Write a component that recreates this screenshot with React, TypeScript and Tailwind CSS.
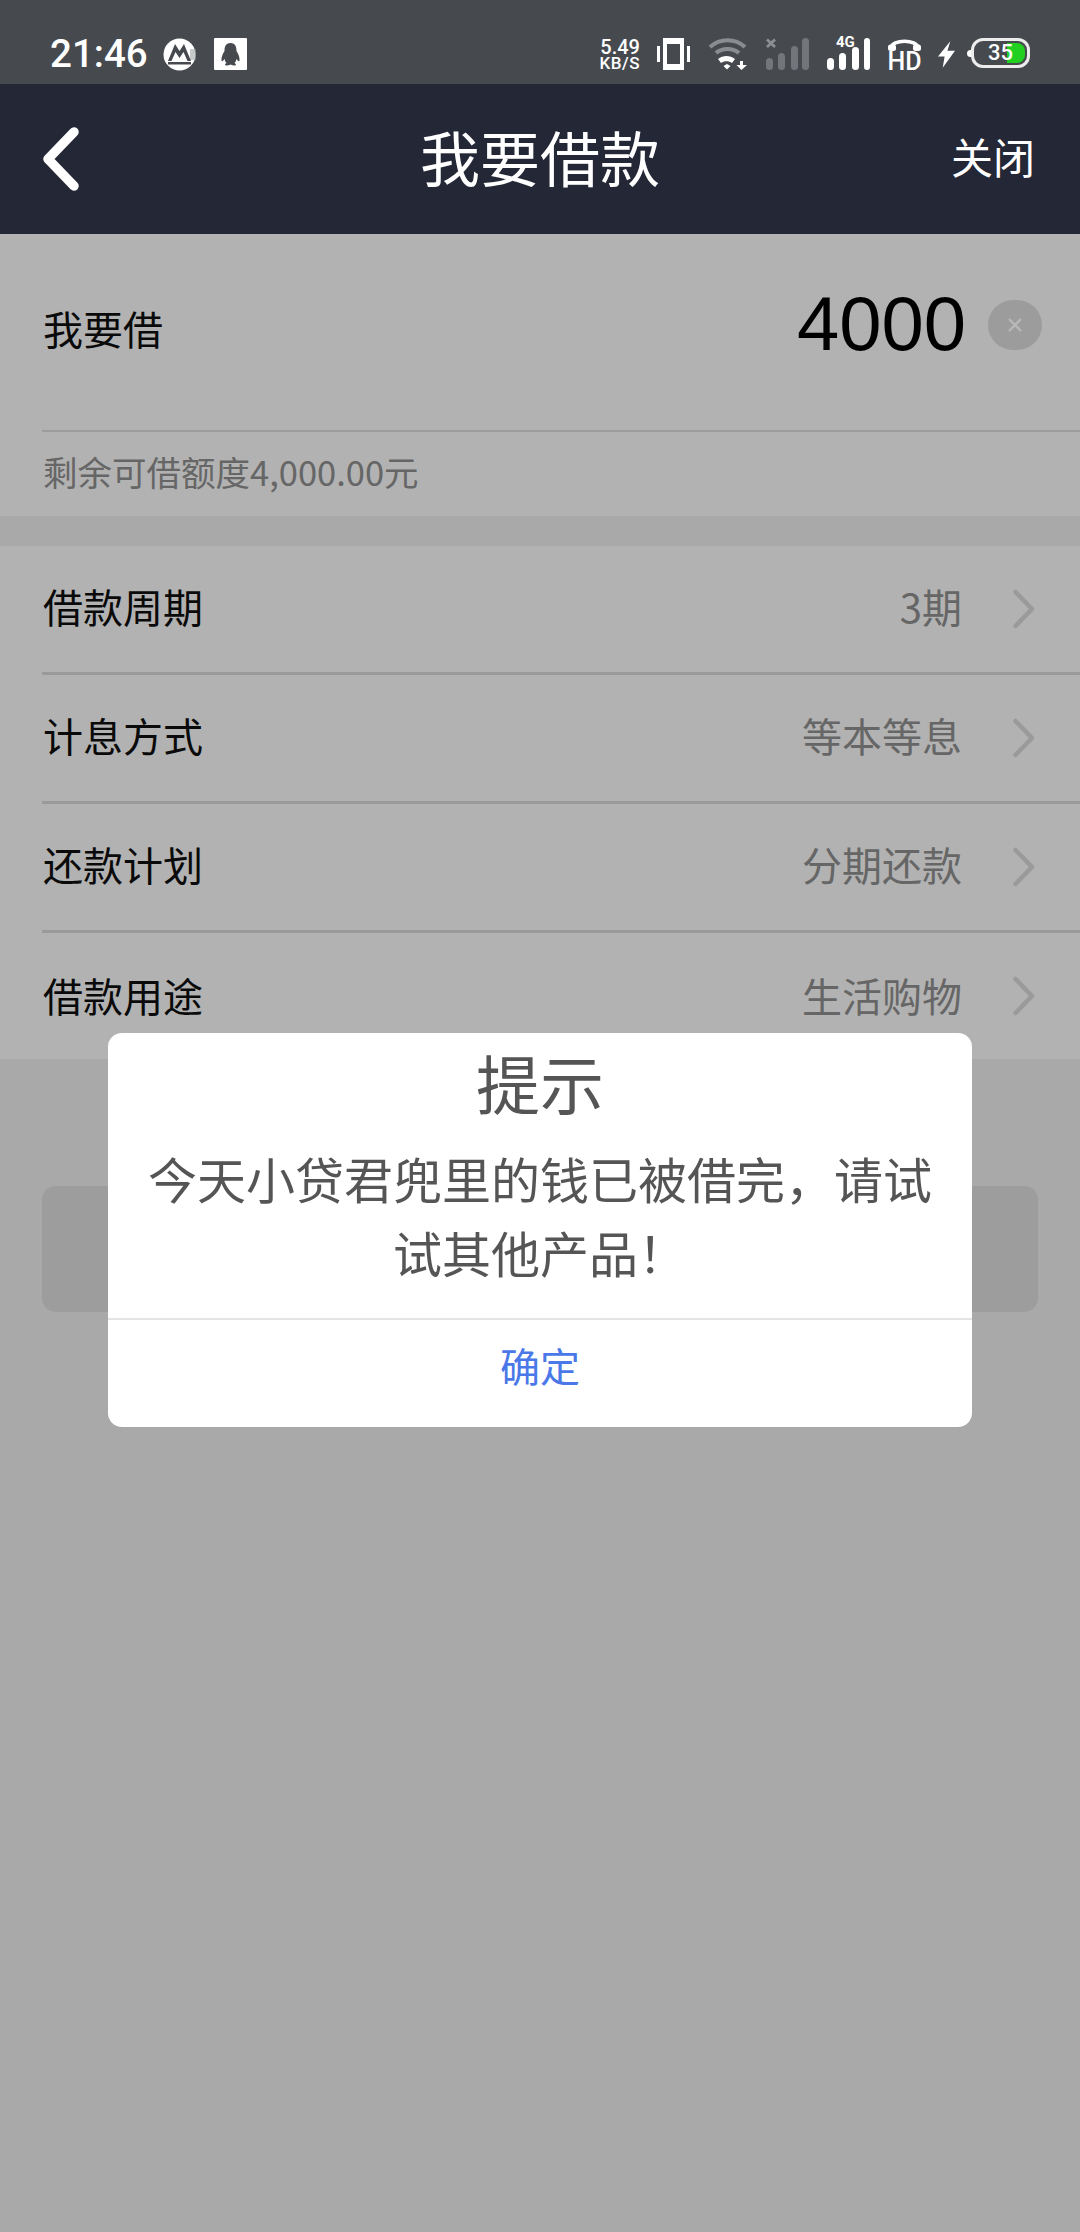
const cjk = "font-['Noto_Sans_CJK_SC','Liberation_Sans',sans-serif]";

function Chevron() {
  return (
    <svg width="24" height="40" viewBox="0 0 24 40" className="shrink-0" fill="none">
      <path d="M3.5 3 L20 20 L3.5 37" stroke="#9a9a9a" strokeWidth="4.5" strokeLinecap="round" strokeLinejoin="round" />
    </svg>
  );
}

function Row({ label, value, border = true, last = false }: { label: string; value: string; border?: boolean; last?: boolean }) {
  return (
    <div className={`${last ? 'h-[126px]' : 'h-[129px]'} pl-[42px]`}>
      <div className={`h-full flex items-center pr-[44px] ${border ? 'border-b-[3px] border-[#9a9a9a]' : ''}`}>
        <span className={`text-[40px] leading-none text-[#0a0a0a] flex-1 pl-[1px] ${last ? 'pb-[2px]' : 'pb-[6px]'}`}>{label}</span>
        <span className={`text-[40px] leading-none text-[#666666] mr-[50px] ${last ? 'pb-[2px]' : 'pb-[6px]'}`}>{value}</span>
        <Chevron />
      </div>
    </div>
  );
}

function StatusBar() {
  return (
    <div className="h-[84px] bg-[#464a4f] flex items-center pt-[24px] pl-[50px] pr-[50px] text-white font-['Roboto',sans-serif]">
      <span className="text-[38.5px] leading-none font-medium w-[113px]">21:46</span>
      <svg width="33" height="33" viewBox="0 0 33 33" className="shrink-0">
        <circle cx="16.5" cy="16.5" r="16" fill="#ffffff" />
        <path d="M27 11 H33 V22 H27 Z" fill="#9a9da0" opacity="0.55" />
        <path d="M5 23 L12 6 L16.5 13 L21 6 L28 23 L24.5 23 L20.5 14 L16.5 20 L12.5 14 L8.5 23 Z" fill="#464a4f" />
        <path d="M5 24 H28 V26.5 H5 Z" fill="#464a4f" />
      </svg>
      <svg width="33" height="32" viewBox="0 0 33 32" className="shrink-0 ml-[18px]">
        <rect width="33" height="32" rx="1" fill="#ffffff" />
        <path d="M16.5 5 C11.5 5 10.5 9 10.5 13 C9 15.5 7 19 7.5 23 C8.5 23.5 9.5 22.5 10.5 21 C11 23 11.5 24 12.5 25 C10.5 26 10.5 27.5 13 27.5 C15 27.5 16 26.5 16.5 26.5 C17 26.5 18 27.5 20 27.5 C22.5 27.5 22.5 26 20.5 25 C21.5 24 22 23 22.5 21 C23.5 22.5 24.5 23.5 25.5 23 C26 19 24 15.5 22.5 13 C22.5 9 21.5 5 16.5 5 Z" fill="#464a4f" />
      </svg>
      <div className="flex-1" />
      <div className="w-[44px] flex flex-col items-end font-medium shrink-0 pt-[1px]">
        <span className="text-[20px] leading-[17px]">5.49</span>
        <span className="text-[17px] leading-[15px] tracking-[0.5px]">KB/S</span>
      </div>
      <svg width="33" height="32" viewBox="0 0 33 32" className="shrink-0 ml-[17px]" fill="#ffffff">
        <rect x="0" y="8" width="3" height="16" />
        <rect x="30" y="8" width="3" height="16" />
        <path fillRule="evenodd" d="M6 0 H27 V32 H6 Z M10 6 V26 H23 V6 Z" />
      </svg>
      <svg width="41" height="32" viewBox="0 0 41 32" className="shrink-0 ml-[18px]" fill="none">
        <path d="M2 9 C12 0 27 0 37 9" stroke="#8a8d90" strokeWidth="4" />
        <path d="M8 15 C14 9.5 25 9.5 31 15" stroke="#8a8d90" strokeWidth="4" />
        <path d="M10 21 C15 17 22 17 27 21 L24 25 C21 22.5 16 22.5 13 25 Z" fill="#ffffff" />
        <path d="M15.5 28 L19 26 L22.5 28 L19 31.5 Z" fill="#ffffff" />
        <path d="M32 23 H35 V27 H39 L33.5 32 L28.5 27 H32 Z" fill="#ffffff" />
      </svg>
      <svg width="43" height="32" viewBox="0 0 43 32" className="shrink-0 ml-[17px]">
        <path d="M1 1.5 L9 9 M9 1.5 L1 9" stroke="#8c8f92" strokeWidth="2.8" />
        <rect x="0" y="20" width="7" height="12" rx="3.5" fill="#72757a" />
        <rect x="12" y="15" width="7" height="17" rx="3.5" fill="#72757a" />
        <rect x="25" y="8" width="7" height="24" rx="3.5" fill="#72757a" />
        <rect x="36" y="0" width="7" height="32" rx="3.5" fill="#72757a" />
      </svg>
      <div className="relative w-[43px] h-[32px] shrink-0 ml-[18px]">
        <svg width="43" height="32" viewBox="0 0 43 32" fill="#ffffff">
          <rect x="0" y="20" width="7" height="12" rx="3.5" />
          <rect x="12" y="15" width="7" height="17" rx="3.5" />
          <rect x="25" y="9" width="7" height="23" rx="3.5" />
          <rect x="37" y="0" width="6" height="32" rx="3" />
        </svg>
        <span className="absolute left-[9px] top-[-3px] text-[15px] leading-none font-bold">4G</span>
      </div>
      <div className="w-[35px] h-[32px] ml-[17px] shrink-0 flex flex-col items-center">
        <svg width="35" height="15" viewBox="0 0 35 15" fill="none" className="shrink-0">
          <path d="M4 10 C5 1 30 1 31 10" stroke="#ffffff" strokeWidth="3.5" />
          <rect x="1" y="6.5" width="8" height="6.5" rx="2.5" fill="#ffffff" />
          <rect x="26" y="6.5" width="8" height="6.5" rx="2.5" fill="#ffffff" />
        </svg>
        <span className="text-[25px] leading-[17px] font-medium">HD</span>
      </div>
      <svg width="17" height="27" viewBox="0 0 18 28" className="shrink-0 ml-[16px]" fill="#ffffff">
        <path d="M13 0 L0 16 L7 16 L5 28 L18 10 L10 10 Z" />
      </svg>
      <div className="relative w-[63px] h-[32px] ml-[12px] shrink-0">
        <div className="absolute left-0 top-[12px] w-[6px] h-[7px] bg-white rounded-l-full" />
        <div className="absolute left-[4px] top-0 w-[59px] h-[30px] rounded-[12px] border-[3px] border-[#ececec]">
          <div className="absolute right-[2px] top-[2px] w-[18px] h-[20px] rounded-r-[8px] bg-[#22d022]" />
        </div>
        <span className="absolute left-[21px] top-[5px] text-[22px] leading-[20px] font-medium">35</span>
      </div>
    </div>
  );
}

export default function App() {
  return (
    <div className={`relative w-[1080px] h-[2232px] overflow-hidden bg-[#a9a9a9] ${cjk}`}>
      <StatusBar />
      <header className="h-[150px] bg-[#232736] flex items-center justify-between pl-[42px] pr-[45px] relative">
        <svg width="38" height="64" viewBox="0 0 38 64" fill="none" className="shrink-0">
          <path d="M32 5 L6 32 L32 59" stroke="#ffffff" strokeWidth="9.5" strokeLinecap="round" strokeLinejoin="round" />
        </svg>
        <h1 className="absolute left-0 right-0 text-center text-[60px] leading-none text-white font-normal pb-[6px]">我要借款</h1>
        <span className="text-[42px] leading-none text-white pb-[6px]">关闭</span>
      </header>

      <section className="h-[282px] bg-[#b2b2b2] pl-[42px]">
        <div className="h-[198px] border-b-[2px] border-[#9c9c9c] flex items-center pr-[38px] pb-[14px]">
          <span className="text-[40px] leading-none text-[#0a0a0a] flex-1 pt-[6px] pl-[1px]">我要借</span>
          <span className="text-[76px] leading-none text-black font-['Liberation_Sans',sans-serif] mr-[22px] pb-[2px]">4000</span>
          <div className="w-[54px] h-[50px] rounded-full bg-[#9c9c9c] flex items-center justify-center shrink-0">
            <svg width="18" height="18" viewBox="0 0 18 18" fill="none">
              <path d="M3 3 L15 15 M15 3 L3 15" stroke="#b8b8b8" strokeWidth="2.4" />
            </svg>
          </div>
        </div>
        <div className="h-[84px] flex items-center text-[34.5px] leading-none text-[#666666] pb-[6px] pl-[1px]">剩余可借额度4,000.00元</div>
      </section>

      <section className="mt-[30px] bg-[#b2b2b2]">
        <Row label="借款周期" value="3期" />
        <Row label="计息方式" value="等本等息" />
        <Row label="还款计划" value="分期还款" />
        <Row label="借款用途" value="生活购物" border={false} last />
      </section>

      <div className="mx-[42px] mt-[127px] h-[126px] rounded-[14px] bg-[#9d9d9d]" />

      <div className="absolute left-[108px] top-[1033px] w-[864px] h-[394px] bg-white rounded-[14px] flex flex-col">
        <div className="text-center text-[64px] leading-[68px] text-[#555555] pt-[14px]">提示</div>
        <p className="text-center text-[49px] leading-[74px] text-[#555555] px-[40px] pt-[26px] flex-1 m-0">今天小贷君兜里的钱已被借完，请试试其他产品！</p>
        <div className="h-[109px] border-t-[2px] border-[#e4e4e4] flex items-center justify-center text-[40px] leading-none text-[#4a78e8] pb-[18px]">确定</div>
      </div>
    </div>
  );
}
